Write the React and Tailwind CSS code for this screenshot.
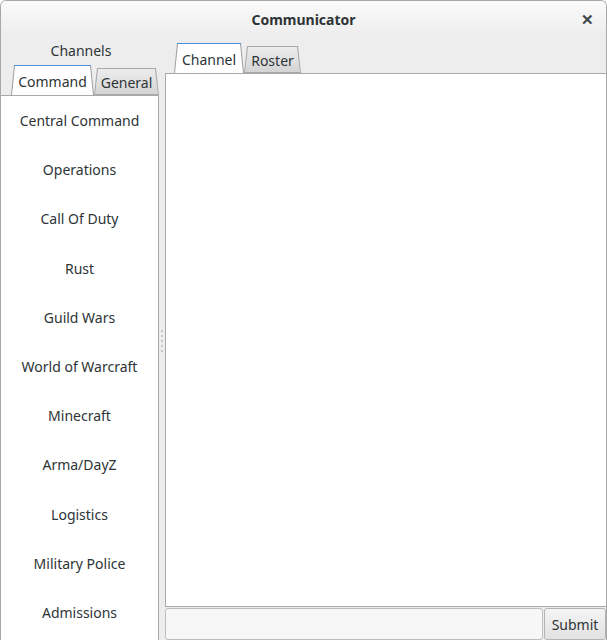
import React, { useState } from 'react';

const channels = [
  'Central Command',
  'Operations',
  'Call Of Duty',
  'Rust',
  'Guild Wars',
  'World of Warcraft',
  'Minecraft',
  'Arma/DayZ',
  'Logistics',
  'Military Police',
  'Admissions',
];

// trapezoid tab: before = border colour, after = fill, both clipped to the same shape
const Tab = ({ label, active, onClick, className = '' }) => (
  <button
    onClick={onClick}
    className={
      (active
        ? "relative z-10 h-[30px] pt-[3px] text-[14px] text-[#2e3436] before:content-[''] before:absolute before:inset-0 before:-z-10 before:bg-[linear-gradient(to_bottom,#4a90d9_0,#4a90d9_1px,#a1a1a1_1px)] before:[clip-path:polygon(3px_0,calc(100%-3px)_0,100%_100%,0_100%)] after:content-[''] after:absolute after:top-[1px] after:left-[1px] after:right-[1px] after:bottom-0 after:-z-10 after:bg-white after:[clip-path:polygon(3px_0,calc(100%-3px)_0,100%_100%,0_100%)] "
        : "relative h-[27px] pt-[2px] text-[14px] text-[#2e3436] before:content-[''] before:absolute before:inset-0 before:-z-10 before:bg-[#a8a8a8] before:[clip-path:polygon(3px_0,calc(100%-3px)_0,100%_100%,0_100%)] after:content-[''] after:absolute after:top-[1px] after:left-[1px] after:right-[1px] after:bottom-[1px] after:-z-10 after:bg-gradient-to-b after:from-[#ededed] after:to-[#d4d4d4] after:[clip-path:polygon(3px_0,calc(100%-3px)_0,100%_100%,0_100%)] ") +
      className
    }
  >
    {label}
  </button>
);

export default function App() {
  const [leftTab, setLeftTab] = useState('Command');
  const [rightTab, setRightTab] = useState('Channel');

  return (
    <div className="w-[607px] h-[640px] flex flex-col bg-[#ededed] border border-b-0 border-[#a8a8a8] rounded-t-[6px] overflow-hidden font-['Noto_Sans',sans-serif] text-[#2e3436]">
      {/* title bar */}
      <div className="relative h-[36px] shrink-0 flex items-center justify-center bg-gradient-to-b from-[#fafafa] to-[#ededed]">
        <span className="text-[14px] font-bold text-[#2e3436] mt-[1px]">Communicator</span>
        <span className="absolute right-[12px] top-[11px] text-[15px] font-bold leading-none text-[#3b4446]">✕</span>
      </div>

      <div className="flex-1 flex min-h-0">
        {/* channels column */}
        <div className="w-[158px] shrink-0 flex flex-col min-h-0">
          <div className="h-[28px] shrink-0 flex items-center justify-center text-[14px] pl-[2px] pb-[2px]">Channels</div>
          <div className="h-[30px] shrink-0 flex items-end pl-[10px] isolate">
            <Tab label="Command" className="w-[83px]" active={leftTab === 'Command'} onClick={() => setLeftTab('Command')} />
            <Tab label="General" className="w-[65px]" active={leftTab === 'General'} onClick={() => setLeftTab('General')} />
          </div>
          <div className="flex-1 min-h-0 overflow-hidden bg-white border border-l-0 border-b-0 border-[#a8a8a8] flex flex-col pt-[15px]">
            {channels.map((c) => (
              <div key={c} className="h-[49.2px] shrink-0 text-center text-[14px] leading-[20px]">
                {c}
              </div>
            ))}
          </div>
        </div>

        {/* pane handle */}
        <div className="w-[6px] shrink-0 flex flex-col items-center justify-center gap-[3px] pt-[4px]">
          {[0, 1, 2, 3, 4].map((i) => (
            <div key={i} className="w-[2px] h-[2px] bg-[#c8c8c8]" />
          ))}
        </div>

        {/* channel view */}
        <div className="flex-1 flex flex-col min-w-0">
          <div className="h-[36px] shrink-0 flex items-end pl-[9px] isolate">
            <Tab label="Channel" className="w-[70px]" active={rightTab === 'Channel'} onClick={() => setRightTab('Channel')} />
            <Tab label="Roster" className="w-[57px]" active={rightTab === 'Roster'} onClick={() => setRightTab('Roster')} />
          </div>
          <div className="flex-1 bg-white border border-r-0 border-[#a8a8a8]" />
          <div className="h-[33px] shrink-0 flex pt-[1px]">
            <input
              className="flex-1 min-w-0 bg-[#f7f7f7] border border-[#bdbdbd] rounded-[3px] outline-none px-2 text-[14px]"
              type="text"
            />
            <button className="w-[62px] shrink-0 ml-[1px] bg-gradient-to-b from-[#f4f4f4] to-[#e2e2e2] border border-[#b3b3b3] rounded-[3px] text-[14px] text-[#2e3436]">
              Submit
            </button>
          </div>
        </div>
      </div>
    </div>
  );
}
